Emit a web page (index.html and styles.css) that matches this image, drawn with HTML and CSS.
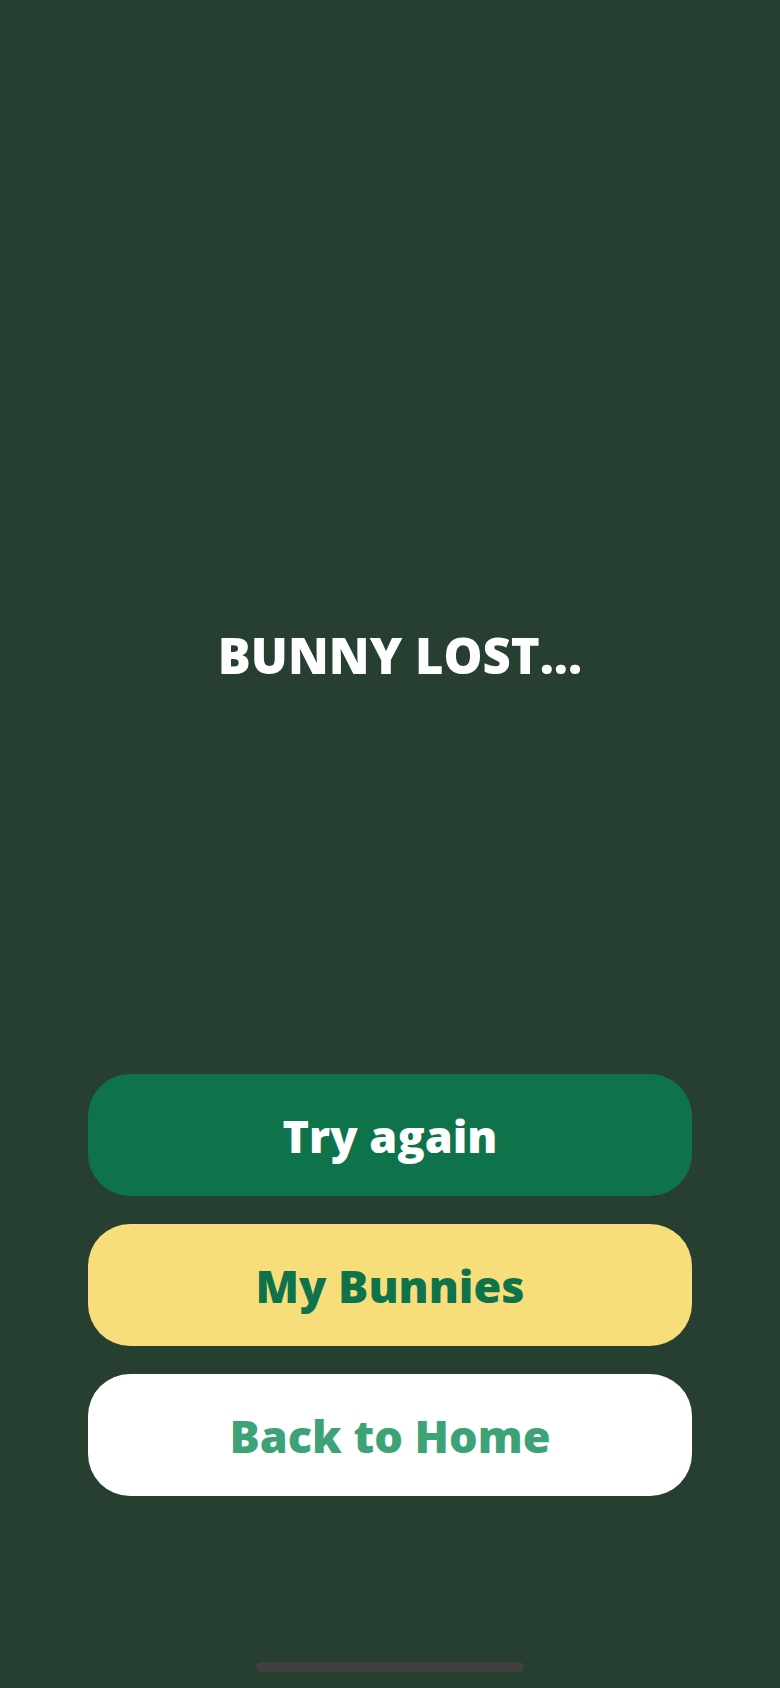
FILE: index.html
```html
<!DOCTYPE html>
<html lang="en">
<head>
<meta charset="utf-8">
<title>Bunny Lost</title>
<link rel="stylesheet" href="styles.css">
</head>
<body>
<main class="screen">
  <h1 class="title">BUNNY LOST...</h1>
  <div class="actions">
    <button class="btn btn-primary">Try again</button>
    <button class="btn btn-yellow">My Bunnies</button>
    <button class="btn btn-white">Back to Home</button>
  </div>
  <div class="home-indicator"></div>
</main>
</body>
</html>
```
FILE: styles.css
```css
html, body {
  margin: 0;
  padding: 0;
  background: #263f30;
}
.screen {
  height: 1688px;
  display: flex;
  flex-direction: column;
  align-items: center;
  box-sizing: border-box;
  font-family: "Open Sans", "Noto Sans", sans-serif;
}
.title {
  margin: 620px 0 0 20px;
  font-size: 49px;
  line-height: 70px;
  font-weight: 800;
  color: #ffffff;
  letter-spacing: 0;
}
.actions {
  margin-top: auto;
  width: 604px;
  display: flex;
  flex-direction: column;
  gap: 28px;
}
.btn {
  height: 122px;
  border: none;
  border-radius: 42px;
  font-family: "Open Sans", "Noto Sans", sans-serif;
  font-size: 45px;
  font-weight: 800;
  padding: 0;
  display: flex;
  align-items: center;
  justify-content: center;
}
.btn-primary {
  background: #0e734b;
  color: #ffffff;
}
.btn-yellow {
  background: #f7de7b;
  color: #0e734b;
}
.btn-white {
  background: #ffffff;
  color: #3da376;
}
.home-indicator {
  width: 268px;
  height: 10px;
  border-radius: 5px;
  background: #404040;
  margin: 166px 0 16px;
}
```
